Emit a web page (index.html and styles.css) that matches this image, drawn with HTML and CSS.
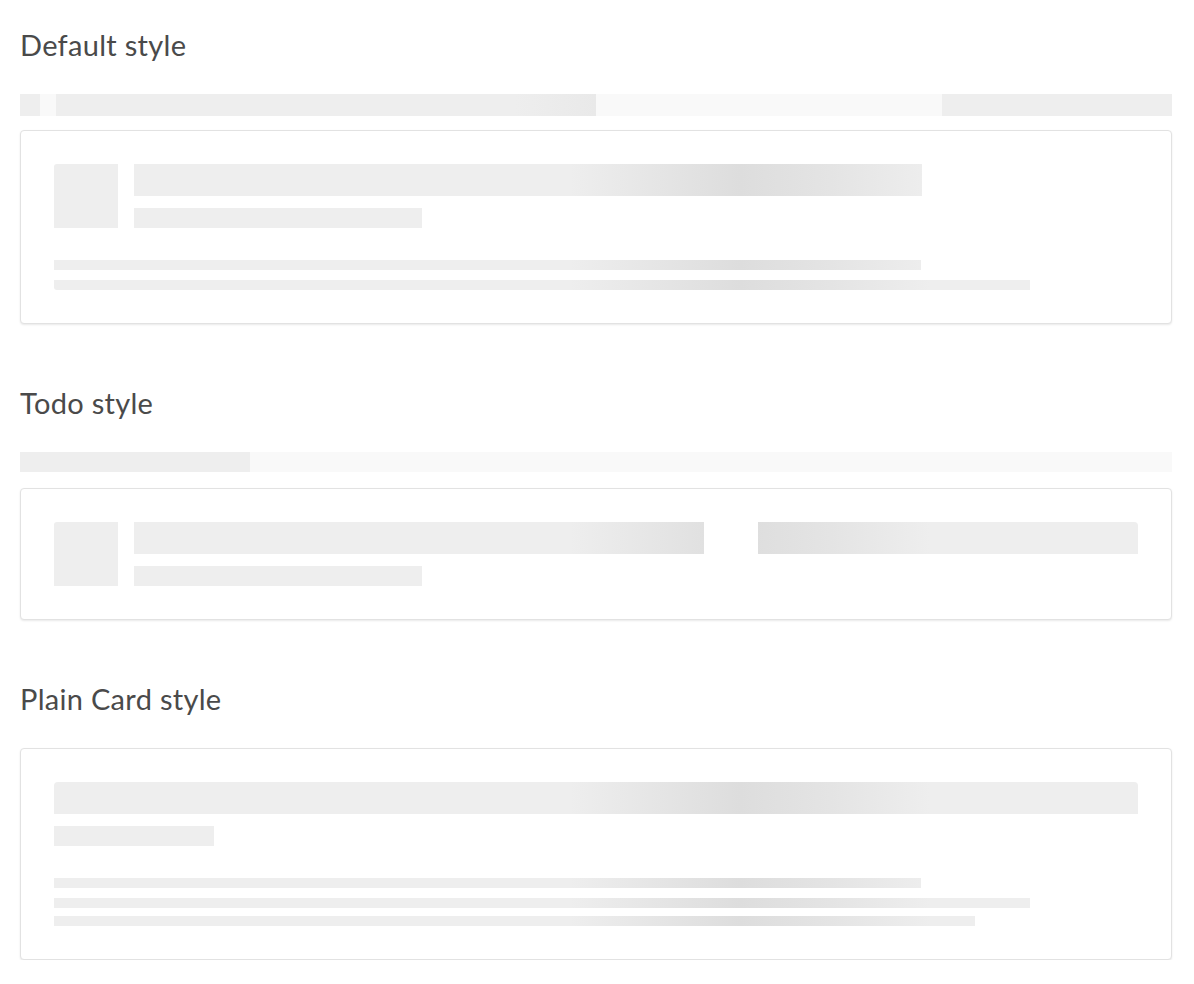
FILE: index.html
```html
<!DOCTYPE html>
<html lang="en">
<head>
<meta charset="utf-8">
<title>Skeleton styles</title>
<link rel="stylesheet" href="styles.css">
</head>
<body>
  <section class="demo demo-first">
    <h2 class="demo-title">Default style</h2>
    <div class="progress progress-default">
      <span class="seg seg-dark seg-a"></span>
      <span class="seg seg-light seg-b"></span>
      <span class="seg seg-dark seg-c"></span>
      <span class="seg seg-light seg-d"></span>
      <span class="seg seg-dark seg-e"></span>
    </div>
    <div class="card">
      <div class="head">
        <div class="avatar sk"></div>
        <div class="head-text">
          <div class="title sk w-title"></div>
          <div class="sub sk w-sub"></div>
        </div>
      </div>
      <div class="lines">
        <div class="line sk w-80"></div>
        <div class="line sk w-90 r-bl"></div>
      </div>
    </div>
  </section>

  <section class="demo">
    <h2 class="demo-title">Todo style</h2>
    <div class="progress progress-todo">
      <span class="seg seg-dark seg-todo"></span>
    </div>
    <div class="card">
      <div class="head">
        <div class="avatar sk"></div>
        <div class="head-text">
          <div class="todo-row">
            <div class="title sk todo-left"></div>
            <div class="title sk todo-right"></div>
          </div>
          <div class="sub sk w-sub"></div>
        </div>
      </div>
    </div>
  </section>

  <section class="demo">
    <h2 class="demo-title">Plain Card style</h2>
    <div class="card">
      <div class="title sk plain-title"></div>
      <div class="sub sk w-sub-plain"></div>
      <div class="lines">
        <div class="line sk w-80"></div>
        <div class="line sk w-90"></div>
        <div class="line sk w-85 tight"></div>
      </div>
    </div>
  </section>
</body>
</html>
```

FILE: styles.css
```css
html, body {
  margin: 0;
  padding: 0;
  background: #ffffff;
}

body {
  padding: 0 22px 0 20px;
  font-family: Lato, "Noto Sans", sans-serif;
  color: #4a4a4a;
}

.demo {
  margin-top: 61px;
}

.demo-first {
  margin-top: 27px;
}

.demo-title {
  margin: 0 0 31px;
  font-size: 29px;
  line-height: 36px;
  font-weight: 400;
  color: #4a4a4a;
  letter-spacing: 0.3px;
}

.progress {
  display: flex;
  background: #f9f9f9;
}

.progress-default {
  height: 22px;
  margin-bottom: 14px;
}

.progress-todo {
  height: 20px;
  margin-bottom: 16px;
}

.seg {
  display: block;
  height: 100%;
}

.seg-dark { background: #eeeeee; }
.seg-light { background: #f9f9f9; }

.seg-a { width: 20px; }
.seg-b { width: 16px; }
.seg-c { width: 540px; background: linear-gradient(to right, #eeeeee 85%, #e9e9e9 100%); }
.seg-d { width: 346px; }
.seg-e { flex: 1; }

.seg-todo { width: 230px; }

.card {
  border: 1px solid #e2e2e2;
  border-radius: 4px;
  box-shadow: 0 1px 2px rgba(0, 0, 0, 0.09);
  padding: 33px;
  background: #fff;
}

.sk {
  background-color: #eeeeee;
  background-image: linear-gradient(to right,
    #eeeeee 0px,
    #eeeeee 570px,
    #e6e6e6 650px,
    #dddddd 740px,
    #e4e4e4 830px,
    #eeeeee 930px,
    #eeeeee 1194px);
  background-attachment: fixed;
  background-repeat: no-repeat;
  background-size: 1194px 100%;
}

.head {
  display: flex;
  gap: 16px;
}

.avatar {
  width: 64px;
  height: 64px;
  flex: none;
  border-radius: 3px 0 0 0;
}

.head-text {
  flex: 1;
  display: flex;
  flex-direction: column;
  gap: 12px;
}

.title {
  height: 32px;
}

.sub {
  height: 20px;
}

.w-title {
  width: 788px;
}

.w-sub {
  width: 288px;
}

.w-sub-plain {
  width: 160px;
  margin-top: 12px;
}

.lines {
  display: flex;
  flex-direction: column;
  gap: 10px;
  margin-top: 32px;
}

.line {
  height: 10px;
}

.tight {
  margin-top: -2px;
}

.w-80 { width: 80%; }
.w-90 { width: 90%; }
.w-85 { width: 85%; }

.r-bl { border-radius: 0 0 0 3px; }

.todo-row {
  display: flex;
  gap: 54px;
}

.todo-left {
  flex: 1;
}

.todo-right {
  width: 380px;
  border-radius: 0 4px 0 0;
}

.plain-title {
  border-radius: 4px 4px 0 0;
}
```
